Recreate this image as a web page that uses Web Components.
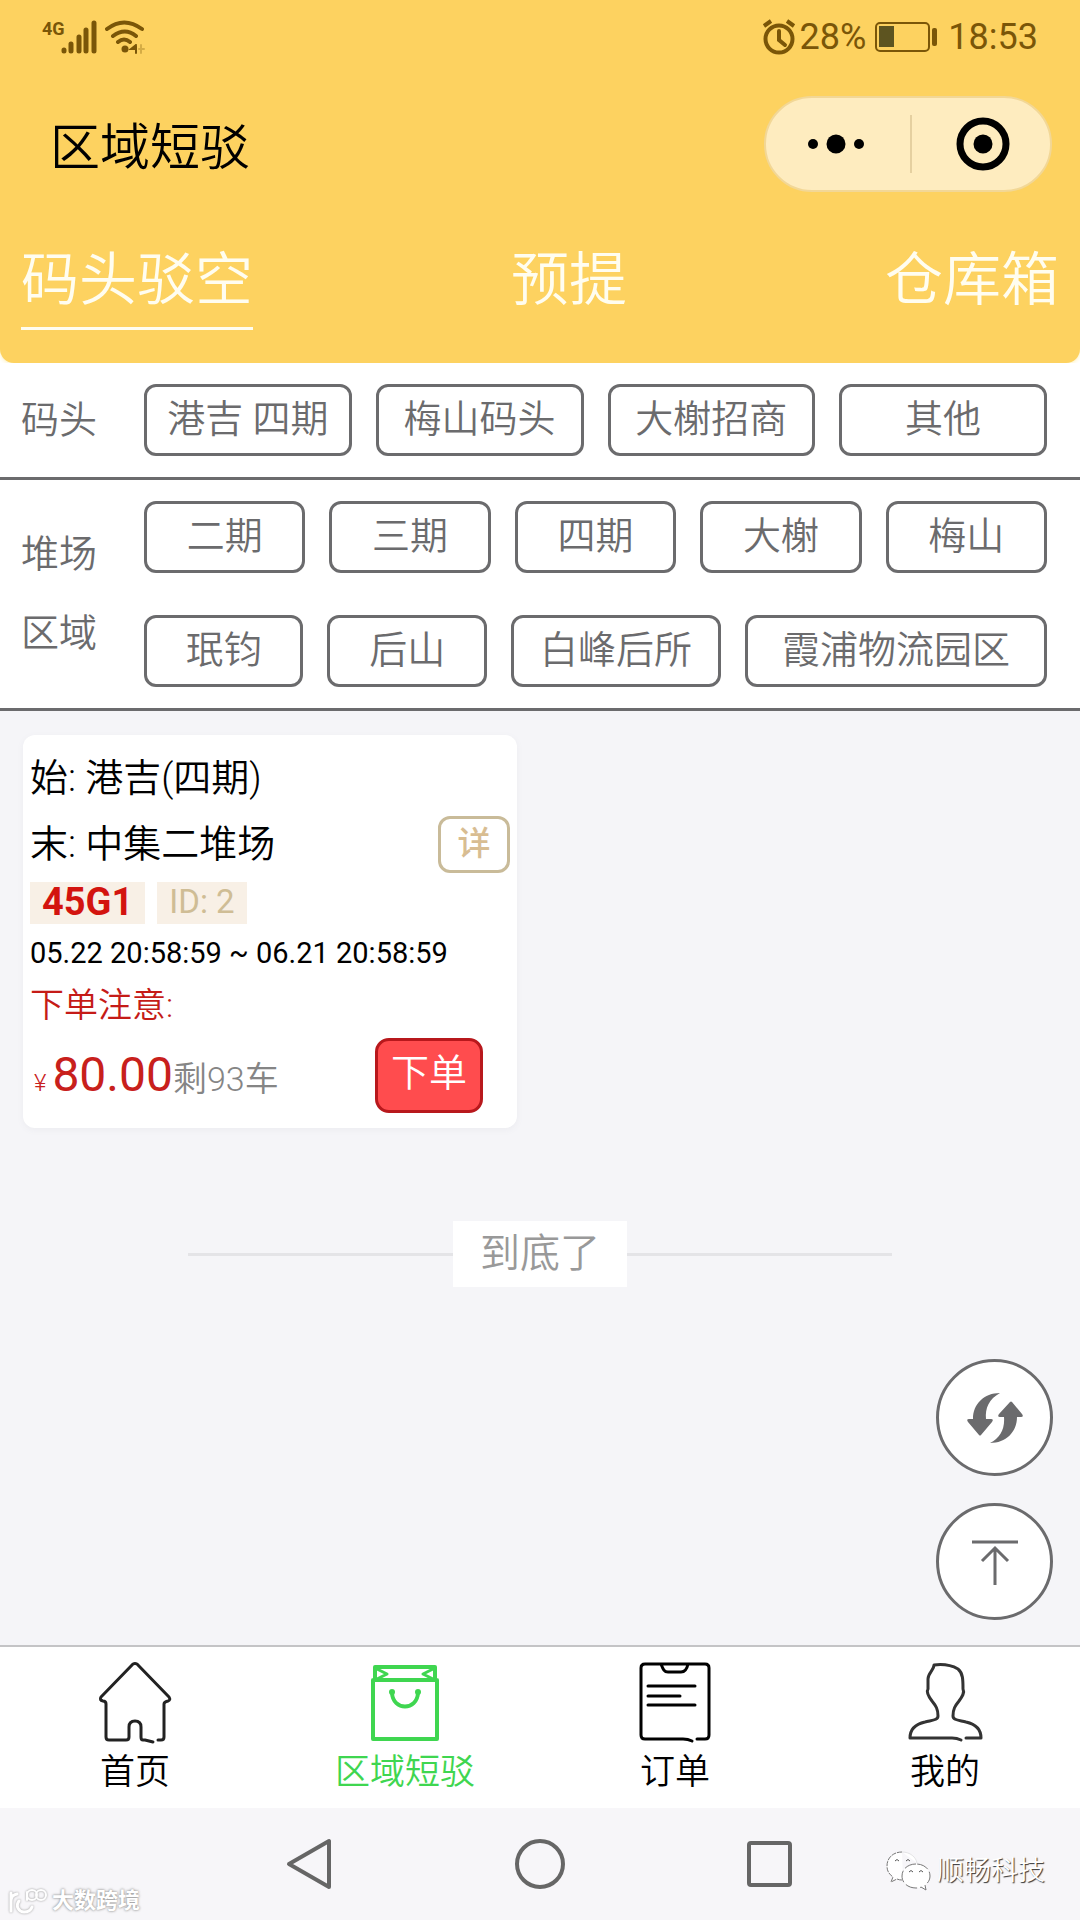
<!DOCTYPE html>
<html lang="zh-CN">
<head>
<meta charset="utf-8">
<meta name="viewport" content="width=device-width, initial-scale=1">
<title>区域短驳</title>
<style>
  html, body { margin: 0; }
  body {
    background: #fff;
    color: #000;
    font-family: Roboto, "Noto Sans CJK SC", sans-serif;
    font-weight: 350;
    font-size: 38px;
    --grey: #6b6b6d;
    --page: #f5f5f8;
    --amber: #fdd260;
  }
</style>
</head>
<body>
<app-page>
  <app-header slot="header">
    <status-bar slot="status"></status-bar>
    <span slot="title">区域短驳</span>
    <mini-capsule slot="actions"></mini-capsule>
    <head-tab slot="tabs" active>码头驳空</head-tab>
    <head-tab slot="tabs">预提</head-tab>
    <head-tab slot="tabs">仓库箱</head-tab>
  </app-header>

  <filter-group slot="filters">
    <span slot="label">码头</span>
    <chip-row>
      <filter-chip>港吉 四期</filter-chip>
      <filter-chip>梅山码头</filter-chip>
      <filter-chip>大榭招商</filter-chip>
      <filter-chip>其他</filter-chip>
    </chip-row>
  </filter-group>
  <filter-group slot="filters">
    <span slot="label">堆场</span>
    <span slot="label">区域</span>
    <chip-row>
      <filter-chip>二期</filter-chip>
      <filter-chip>三期</filter-chip>
      <filter-chip>四期</filter-chip>
      <filter-chip>大榭</filter-chip>
      <filter-chip>梅山</filter-chip>
    </chip-row>
    <chip-row>
      <filter-chip size="s">珉钧</filter-chip>
      <filter-chip size="s">后山</filter-chip>
      <filter-chip size="m">白峰后所</filter-chip>
      <filter-chip size="l">霞浦物流园区</filter-chip>
    </chip-row>
  </filter-group>

  <order-card>
    <span slot="from">始: 港吉(四期)</span>
    <span slot="to">末: 中集二堆场</span>
    <span slot="type">45G1</span>
    <span slot="id">ID: 2</span>
    <span slot="time">05.22 20:58:59 ~ 06.21 20:58:59</span>
    <span slot="notice">下单注意:</span>
    <span slot="price">80.00</span>
    <span slot="left">剩93车</span>
  </order-card>
  <end-mark slot="end">到底了</end-mark>

  <round-button slot="float" label="刷新">
    <svg viewBox="0 0 58 54" width="58" height="54" fill="#6b6b6d">
      <path d="M34 2C18 2 7 13 7 28H3q-3 0-1 3l11 13q1 1 2 0l11-13q2-3-1-3h-5C19 17 23 8 34 2z"/>
      <path d="M24 52C40 52 51 41 51 26h4q3 0 1-3L46 11q-1-1-2 0L33 23q-2 3 1 3h4C39 38 34 47 24 52z"/>
    </svg>
  </round-button>
  <round-button slot="float" label="返回顶部">
    <svg viewBox="0 0 48 48" width="48" height="48" fill="none" stroke="#6b6b6d" stroke-width="3">
      <path d="M1 4h46M24 47V11M11 23l13-13 13 13"/>
    </svg>
  </round-button>

  <tab-bar slot="footer">
    <tab-item label="首页">
      <svg viewBox="0 0 80 84" width="80" height="84" fill="none" stroke="#222" stroke-width="3" stroke-linejoin="round" stroke-linecap="round">
        <path d="M58 81l-8-2h-2q-2 0-2-3V66q0-6-6-6t-6 6v10q0 3-3 3H14q-3 0-3-3V43q0-3-3-3-4-1-2-4L38 3q2-1 4 0l32 33q2 3-1 4-4 1-4 3v33q0 3-3 3h-3"/>
      </svg>
    </tab-item>
    <tab-item label="区域短驳" active>
      <svg viewBox="0 0 80 84" width="80" height="84" fill="none" stroke="#3fd650" stroke-width="4" stroke-linejoin="round">
        <path d="M8 19h64v59H8zM10 19V6h60v13" />
        <path d="M12 8l10 5-10 5M68 8l-10 5 10 5" stroke-width="3"/>
        <path d="M27 32c1 18 25 18 26 0" stroke-width="4"/>
        <circle cx="27" cy="31" r="3" fill="#3fd650" stroke="none"/><circle cx="53" cy="31" r="3" fill="#3fd650" stroke="none"/>
      </svg>
    </tab-item>
    <tab-item label="订单">
      <svg viewBox="0 0 80 84" width="80" height="84" fill="none" stroke="#000" stroke-width="3" stroke-linejoin="round" stroke-linecap="round">
        <path d="M57 80q-4-2-9-2H10q-4 0-4-4V7q0-4 4-4h60q4 0 4 4v67q0 4-4 4h-8M26 3c2 5 3 8 7 8h13c4 0 6-3 7-8M13 25h47M13 35h32M13 44h47"/>
      </svg>
    </tab-item>
    <tab-item label="我的">
      <svg viewBox="0 0 80 84" width="80" height="84" fill="none" stroke="#333" stroke-width="3" stroke-linejoin="round" stroke-linecap="round">
        <path d="M56 79q-4-2-9-2H5c0-9 6-14 15-16 8-2 13-2 13-6 0-7-2-10-6-15-3-4-6-9-4-12V18c0-6 6-9 6-14 8-1 17 0 24 4 5 4 5 11 5 20 2 4-1 8-4 12-4 5-6 8-6 15 0 4 5 4 13 6 9 2 15 7 15 16H61"/>
      </svg>
    </tab-item>
  </tab-bar>
  <system-nav slot="footer"></system-nav>
</app-page>

<script>
  const define = (name, html, setup) => {
    const template = document.createElement('template');
    template.innerHTML = html;
    customElements.define(name, class extends HTMLElement {
      constructor() {
        super();
        this.attachShadow({ mode: 'open' }).append(template.content.cloneNode(true));
      }
      connectedCallback() { if (setup) setup(this, this.shadowRoot); }
    });
  };

  define('app-page', `
    <style>
      :host { display: flex; flex-direction: column; min-height: 100vh; }
      main { flex: 1; position: relative; background: var(--page); padding: 24px 23px; }
      .list { display: grid; grid-template-columns: 1fr 1fr; gap: 46px; }
      .float { position: absolute; right: 27px; bottom: 25px; display: flex; flex-direction: column; gap: 27px; }
    </style>
    <slot name="header"></slot>
    <slot name="filters"></slot>
    <main>
      <div class="list"><slot></slot></div>
      <slot name="end"></slot>
      <div class="float"><slot name="float"></slot></div>
    </main>
    <slot name="footer"></slot>`);

  define('app-header', `
    <style>
      :host { display: block; background: var(--amber); border-radius: 0 0 14px 14px; box-shadow: 0 1px 4px #fdf0b8; }
      .title { display: flex; align-items: center; justify-content: space-between; height: 144px; padding: 0 28px 0 50px; }
      h1 { margin: 0; padding-top: 8px; font-size: 50px; line-height: 60px; font-weight: inherit; }
      nav { display: flex; justify-content: space-between; padding: 17px 21px 33px; }
    </style>
    <slot name="status"></slot>
    <div class="title"><h1><slot name="title"></slot></h1><slot name="actions"></slot></div>
    <nav><slot name="tabs"></slot></nav>`);

  define('status-bar', `
    <style>
      :host { display: flex; align-items: center; justify-content: space-between; height: 72px; padding: 2px 42px 0; box-sizing: border-box; color: #7a5608; font-size: 36px; font-weight: 400; }
      div { display: flex; align-items: center; }
      .net { font-size: 18px; font-weight: 700; line-height: 18px; align-self: flex-start; }
      .signal { margin-left: -4px; margin-right: 8px; }
      .battery { margin: 0 11px 0 9px; }
      .alarm { margin-right: 4px; }
    </style>
    <div>
      <span class="net">4G</span>
      <svg class="signal" width="36" height="34" viewBox="0 0 36 34" stroke="currentColor" stroke-width="5" stroke-linecap="round"><path d="M3 30v1M10 24v7M18 17v14M25 10v21M33 3v28"/></svg>
      <svg width="40" height="34" viewBox="0 0 40 34" fill="none" stroke="currentColor" stroke-width="4" stroke-linecap="round">
        <path d="M2 9q17-13 35 0M8 16q12-9 23 0M13 22q6-5 12 0"/><circle cx="20" cy="29" r="3.5" fill="currentColor" stroke="none"/>
        <path d="M31 25v8M31 25l-5 4h5" stroke-width="2"/><path d="M36 25v8M34 29h5" stroke-width="2" opacity=".3"/></svg>
    </div>
    <div>
      <svg class="alarm" width="34" height="36" viewBox="0 0 34 36" fill="none" stroke="currentColor" stroke-width="4"><circle cx="17" cy="20" r="13.5"/><path d="M17 12v9l6 5" stroke-linecap="round"/><path d="M2 7l7-5M32 7l-7-5"/></svg>
      <span>28%</span>
      <svg class="battery" width="62" height="30" viewBox="0 0 62 30" fill="none"><rect x="1" y="1" width="53" height="28" rx="4" stroke="currentColor" stroke-width="2"/><rect x="4" y="4" width="15" height="21" fill="#5d5420"/><rect x="57" y="6" width="5" height="18" rx="2" fill="currentColor"/></svg>
      <span>18:53</span>
    </div>`);

  define('mini-capsule', `
    <style>
      :host { display: flex; align-items: center; width: 288px; height: 96px; box-sizing: border-box; border: 2px solid #f2d796; border-radius: 48px; background: #feecbf; }
      button { box-sizing: border-box; flex: 1 1 0; height: 58px; padding: 0; border: 0; background: none; display: flex; align-items: center; justify-content: center; }
      button:first-of-type { flex: 0 0 144px; padding-right: 4px; }
      button + button { border-left: 2px solid #e5d0a0; padding-left: 4px; }
    </style>
    <button aria-label="更多"><svg width="58" height="20" viewBox="0 0 58 20"><circle cx="6" cy="10" r="5"/><circle cx="29" cy="10" r="9.5"/><circle cx="52" cy="10" r="5"/></svg></button>
    <button aria-label="关闭"><svg width="54" height="54" viewBox="0 0 54 54"><circle cx="27" cy="27" r="23" fill="none" stroke="#000" stroke-width="7"/><circle cx="27" cy="27" r="9.5"/></svg></button>`);

  define('head-tab', `
    <style>
      :host { display: block; }
      button { display: block; padding: 0; border: 0; border-bottom: 3px solid transparent; background: none; color: #fffdf0; font: inherit; font-size: 58px; line-height: 94px; }
      :host([active]) button { border-color: #fffdf0; }
    </style>
    <button><slot></slot></button>`);

  define('filter-group', `
    <style>
      :host { display: flex; align-items: center; padding: 21px 33px 21px 21px; border-bottom: 3px solid var(--grey); background: #fff; color: var(--grey); }
      .label { flex: 0 0 123px; display: flex; flex-direction: column; line-height: 79px; margin: -4px 0; }
      .rows { flex: 1; display: flex; flex-direction: column; gap: 42px; }
    </style>
    <div class="label"><slot name="label"></slot></div>
    <div class="rows"><slot></slot></div>`);

  define('chip-row', `
    <style>:host { display: flex; gap: 24px; }</style>
    <slot></slot>`);

  define('filter-chip', `
    <style>
      :host { display: block; flex: 1 1 0; }
      :host([size="s"]) { flex-grow: 19; }
      :host([size="m"]) { flex-grow: 25; }
      :host([size="l"]) { flex-grow: 36; }
      button { display: block; width: 100%; height: 72px; padding: 0 0 3px; border: 3px solid var(--grey); border-radius: 12px; background: #fff; color: inherit; font: inherit; line-height: 62px; white-space: nowrap; }
    </style>
    <button><slot></slot></button>`);

  define('order-card', `
    <style>
      :host { display: block; padding: 10px 7px 15px; border-radius: 12px; background: #fff; box-shadow: 0 2px 6px #ececf0; }
      .line { display: flex; align-items: center; justify-content: space-between; line-height: 66px; }
      .tags { display: flex; gap: 12px; margin-top: 5px; line-height: 40px; }
      .tags span { padding: 0 12px; height: 42px; background: #f8f0e6; }
      .tags .type { color: #d3140f; font-weight: 700; }
      .tags .id { color: #cfbd95; font-size: 33px; font-weight: 400; }
      .time { margin-top: 8px; font-size: 29px; font-weight: 380; line-height: 42px; }
      .notice { margin-top: 10px; font-size: 34px; line-height: 42px; color: #c51b17; }
      .buy { display: flex; align-items: center; justify-content: space-between; margin-top: 12px; padding: 0 27px 0 4px; }
      .cost { display: flex; align-items: baseline; line-height: 60px; padding-top: 7px; }
      .price { color: #c8201c; font-size: 48px; font-weight: 400; }
      .yen { color: #c8201c; font-size: 24px; margin-right: 6px; }
      .left { color: #858585; font-size: 34px; }
      button { box-sizing: border-box; padding: 0; background: #fff; font: inherit; }
      .detail { width: 72px; height: 57px; border: 3px solid #c9bb99; border-radius: 12px; color: #d8bd92; font-size: 33px; font-weight: 500; line-height: 48px; }
      .order { width: 108px; height: 75px; border: 3px solid #b8181c; border-radius: 14px; background: #ff4c4e; color: #fff; line-height: 64px; padding-bottom: 5px; }
    </style>
    <div class="line"><slot name="from"></slot></div>
    <div class="line"><slot name="to"></slot><button class="detail">详</button></div>
    <div class="tags"><span class="type"><slot name="type"></slot></span><span class="id"><slot name="id"></slot></span></div>
    <div class="time"><slot name="time"></slot></div>
    <div class="notice"><slot name="notice"></slot></div>
    <div class="buy">
      <div class="cost"><span class="yen">¥</span><span class="price"><slot name="price"></slot></span><span class="left"><slot name="left"></slot></span></div>
      <button class="order">下单</button>
    </div>`);

  define('end-mark', `
    <style>
      :host { display: flex; align-items: center; width: 68%; margin: 93px auto 0; color: #999; font-size: 40px; line-height: 66px; }
      :host::before, :host::after { content: ""; flex: 1; height: 3px; background: #e4e4e7; }
      span { padding: 0 27px; background: #fff; }
    </style>
    <span><slot></slot></span>`);

  define('round-button', `
    <style>
      :host { display: block; }
      button { display: flex; align-items: center; justify-content: center; box-sizing: border-box; width: 117px; height: 117px; padding: 0; border: 3px solid var(--grey); border-radius: 50%; background: #fff; }
    </style>
    <button><slot></slot></button>`,
    (host, root) => root.querySelector('button').setAttribute('aria-label', host.getAttribute('label')));

  define('tab-bar', `
    <style>:host { display: flex; background: #fff; border-top: 2px solid #c4c4c6; }</style>
    <slot></slot>`);

  define('tab-item', `
    <style>
      :host { display: block; flex: 1 1 0; }
      a { display: flex; flex-direction: column; align-items: center; gap: 3px; padding: 14px 0 11px; color: #000; font-size: 35px; line-height: 49px; text-decoration: none; }
      :host([active]) a { color: #3fd650; }
    </style>
    <a href="#"><slot></slot><span></span></a>`,
    (host, root) => { root.querySelector('span').textContent = host.getAttribute('label'); });

  define('system-nav', `
    <style>
      :host { display: flex; align-items: center; justify-content: center; gap: 178px; position: relative; height: 112px; background: #f7f6f9; }
      button { width: 52px; height: 52px; padding: 0; border: 0; background: none; }
      svg { display: block; }
      .mark { position: absolute; display: flex; align-items: center; color: #fff; }
      .brand { left: 8px; bottom: 5px; gap: 4px; font-size: 22px; line-height: 28px; font-weight: 700; text-shadow: 0 0 3px #999, 0 0 2px #aaa; }
      .wechat { right: 35px; bottom: 28px; gap: 6px; font-size: 27px; line-height: 40px; text-shadow: 1px 1px 1px #333; }
      .brand svg { filter: drop-shadow(0 0 1px #999); }
    </style>
    <button aria-label="返回"><svg width="52" height="52" viewBox="0 0 52 52" fill="none" stroke="#666" stroke-width="4" stroke-linejoin="round"><path d="M45 3v46L5 26z"/></svg></button>
    <button aria-label="主页"><svg width="52" height="52" viewBox="0 0 52 52" fill="none" stroke="#666" stroke-width="4"><circle cx="26" cy="26" r="23"/></svg></button>
    <button aria-label="最近任务"><svg width="52" height="52" viewBox="0 0 52 52" fill="none" stroke="#666" stroke-width="4"><rect x="5" y="5" width="41" height="42" rx="2"/></svg></button>
    <div class="mark brand">
      <svg width="40" height="28" viewBox="0 0 40 28" fill="none" stroke="#fff" stroke-width="3" stroke-linecap="round"><path d="M3 6v18M3 14q0-6 6-7M11 14c-4 5 0 11 5 11 4 0 7-2 8-5"/><path d="M19 13V5" stroke-width="2"/><circle cx="24" cy="8" r="5" stroke-width="2"/><circle cx="33" cy="8" r="5" stroke-width="2"/></svg>
      <span>大数跨境</span>
    </div>
    <div class="mark wechat">
      <svg width="46" height="42" viewBox="0 0 46 42" fill="#fff" stroke="#777" stroke-width="1">
        <path d="M17 2C8 2 2 8 2 16c0 5 2 8 6 11l-2 5 6-3c2 1 4 1 6 1" stroke-dasharray="5 1"/><path d="M17 2c8 0 14 5 15 11" stroke="#e4e4e6"/>
        <path d="M31 14c-8 0-14 5-14 12s6 12 14 12c2 0 4 0 5-1l5 3-1-5c3-2 5-5 5-9 0-7-6-12-14-12z" stroke-dasharray="12 3"/>
        <path d="M10 11q2-3 4 0M21 11q2-3 4 0M24 22q2-3 4 0M34 22q2-3 4 0" fill="none" stroke="#555"/></svg>
      <span>顺畅科技</span>
    </div>`);
</script>
</body>
</html>
